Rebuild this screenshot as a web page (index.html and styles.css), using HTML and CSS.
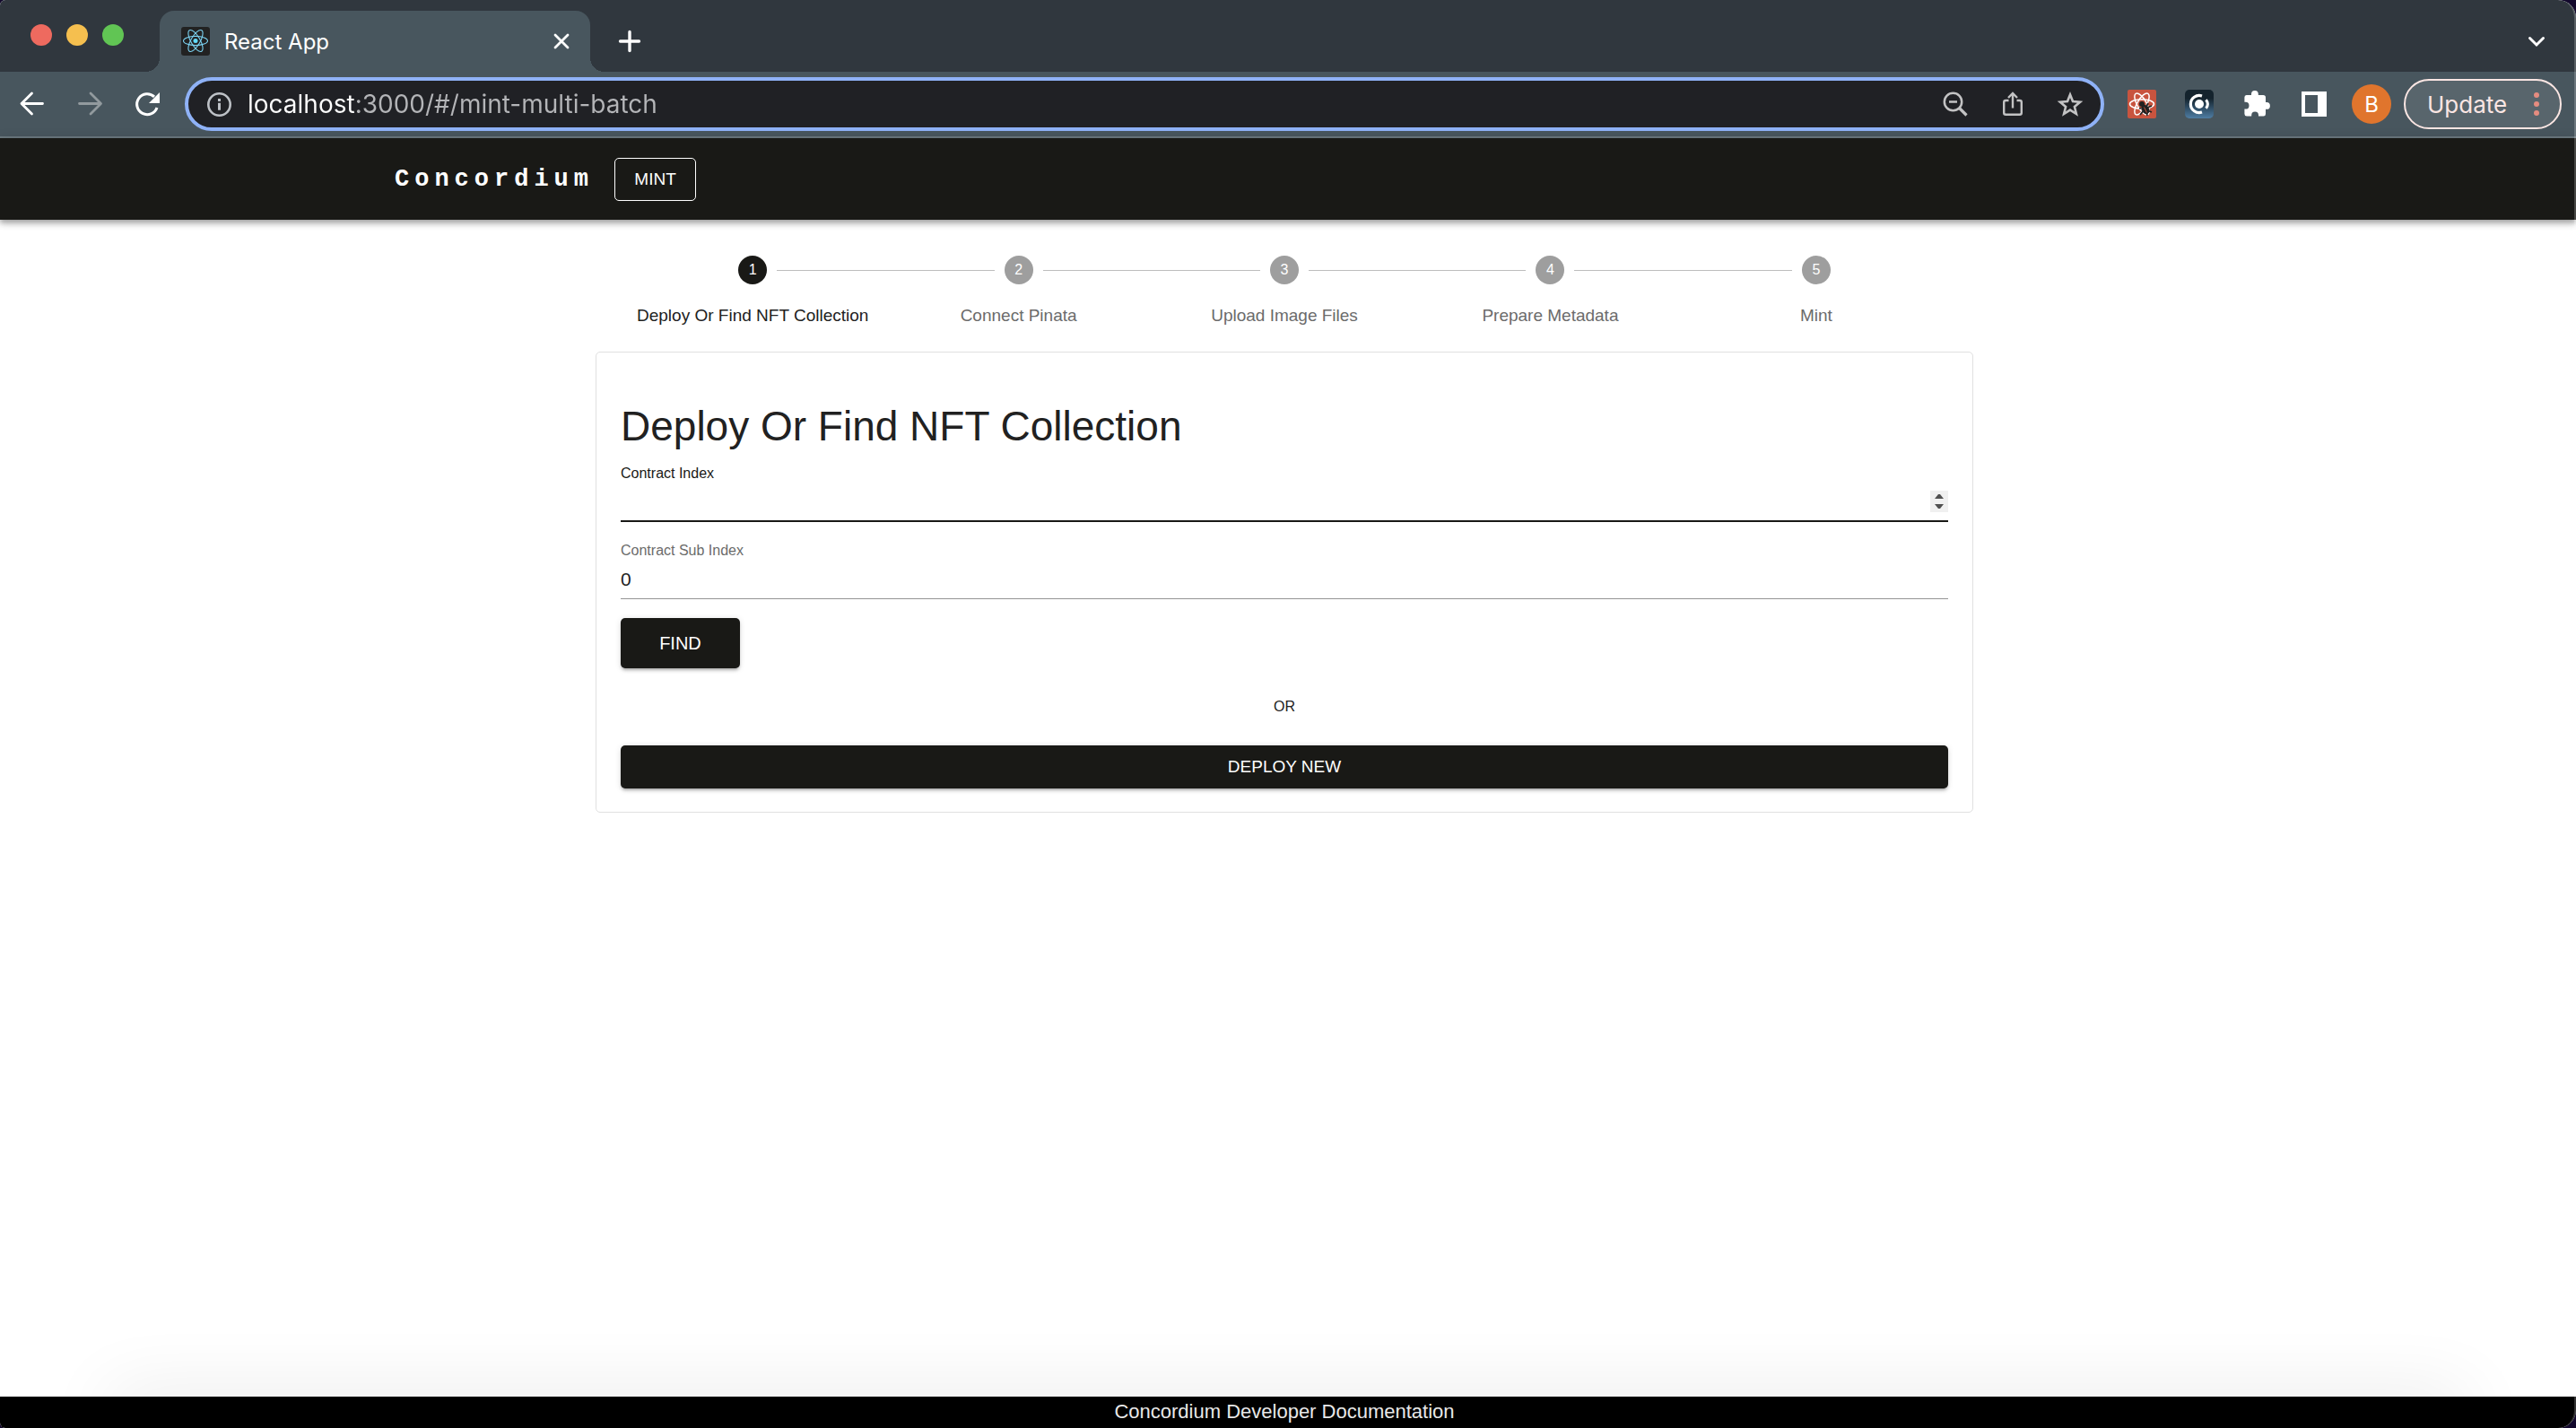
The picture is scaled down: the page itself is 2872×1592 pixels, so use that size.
FILE: index.html
```html
<!DOCTYPE html>
<html lang="en">
<head>
  <meta charset="utf-8">
  <meta name="viewport" content="width=device-width, initial-scale=1">
  <title>React App</title>
  <link rel="stylesheet" href="styles.css">
</head>
<body>
  <div class="window">
    <div class="tab-strip">
      <div class="traffic-lights">
        <span class="light light-close"></span>
        <span class="light light-minimise"></span>
        <span class="light light-zoom"></span>
      </div>
      <div class="tab">
        <svg class="icon" viewBox="0 0 32 32" aria-hidden="true">
          <rect width="32" height="32" rx="3" fill="#222"/>
          <circle cx="16" cy="15.500" r="2.500" fill="#61dafb"/>
          <g fill="none" stroke="#7cd3f2" stroke-width="1.100">
            <ellipse cx="16" cy="15.500" rx="13.500" ry="5.100"/>
            <ellipse cx="16" cy="15.500" rx="13.500" ry="5.100" transform="rotate(60 16 15.500)"/>
            <ellipse cx="16" cy="15.500" rx="13.500" ry="5.100" transform="rotate(120 16 15.500)"/>
          </g>
        </svg>
        <span class="tab-title">React App</span>
        <button class="icon-button" type="button" aria-label="Close tab">
          <svg class="icon" viewBox="0 0 32 32"><path d="M9 9l14 14M23 9L9 23" stroke="#fff" stroke-width="2.800" stroke-linecap="round"/></svg>
        </button>
      </div>
      <button class="icon-button new-tab" type="button" aria-label="New tab">
        <svg class="icon" viewBox="0 0 32 32"><path d="M16 5.500v21M5.500 16h21" stroke="#fff" stroke-width="3.400" stroke-linecap="round"/></svg>
      </button>
      <button class="icon-button tab-search" type="button" aria-label="Search tabs">
        <svg class="icon" viewBox="0 0 32 32"><path d="M8.500 12.500l7.500 7.500 7.500-7.500" fill="none" stroke="#fff" stroke-width="3" stroke-linecap="round"/></svg>
      </button>
    </div>

    <div class="toolbar">
      <div class="history">
        <button class="icon-button" type="button" aria-label="Back">
          <svg class="icon" viewBox="0 0 32 32"><path d="M27.500 15.500H4M15.500 4L4 15.500 15.500 27" fill="none" stroke="#fff" stroke-width="2.800" stroke-linecap="round" stroke-linejoin="round"/></svg>
        </button>
        <button class="icon-button" type="button" aria-label="Forward">
          <svg class="icon" viewBox="0 0 32 32"><path d="M4.500 15.500H28M17 4l11.500 11.500L17 27" fill="none" stroke="#929a9e" stroke-width="2.800" stroke-linecap="round" stroke-linejoin="round"/></svg>
        </button>
        <button class="icon-button" type="button" aria-label="Reload">
          <svg class="icon" viewBox="0 0 32 32"><path d="M27 20A11.500 11.500 0 1 1 24 7.800" fill="none" stroke="#fff" stroke-width="3"/><path d="M30 3v12H18z" fill="#fff"/></svg>
        </button>
      </div>

      <div class="omnibox">
        <svg class="icon" viewBox="0 0 32 32" aria-hidden="true"><circle cx="16.500" cy="16.500" r="12.200" fill="none" stroke="#bdc1c6" stroke-width="2.600"/><path d="M16.500 14.800v8" stroke="#bdc1c6" stroke-width="3"/><path d="M16.500 10v3" stroke="#bdc1c6" stroke-width="3"/></svg>
        <input class="address" type="text" aria-label="Address" value="localhost:3000/#/mint-multi-batch">
        <button class="icon-button" type="button" aria-label="Zoom">
          <svg class="icon" viewBox="0 0 32 32"><g fill="none" stroke="#c3c3c4" stroke-width="2.500"><circle cx="13.500" cy="13.500" r="9.700"/><path d="M9 13.500h9"/><path d="M20.500 20.500l8 8" stroke-width="3.200"/></g></svg>
        </button>
        <button class="icon-button" type="button" aria-label="Share">
          <svg class="icon" viewBox="0 0 32 32"><path d="M11.500 12H8.200a2 2 0 0 0-2 2v11.800a2 2 0 0 0 2 2h15.600a2 2 0 0 0 2-2V14a2 2 0 0 0-2-2h-3.300M16 20.500V4.500M11 9l5-5 5 5" fill="none" stroke="#c3c3c4" stroke-width="2.400"/></svg>
        </button>
        <button class="icon-button" type="button" aria-label="Bookmark this tab">
          <svg class="icon" viewBox="0 0 32 32"><path d="M16 5.500l3 7.600 8.100.6-6.200 5.300 2 8-6.900-4.400L9.100 27l2-8-6.200-5.300 8.100-.6z" fill="none" stroke="#c3c3c4" stroke-width="2.600"/></svg>
        </button>
      </div>

      <div class="extensions">
        <button class="icon-button" type="button" aria-label="React Developer Tools">
          <svg class="icon" viewBox="0 0 32 32">
            <rect width="32" height="32" rx="2" fill="#c8543f"/>
            <g fill="none" stroke="#fff" stroke-width="1.500">
              <ellipse cx="16" cy="16" rx="13.500" ry="5.200"/>
              <ellipse cx="16" cy="16" rx="13.500" ry="5.200" transform="rotate(60 16 16)"/>
              <ellipse cx="16" cy="16" rx="13.500" ry="5.200" transform="rotate(120 16 16)"/>
            </g>
            <circle cx="16" cy="16" r="3" fill="#222"/>
            <ellipse cx="20" cy="22" rx="4" ry="5.500" transform="rotate(-28 20 22)" fill="#222"/>
            <path d="M13 21l5-1M14 28l4-5M22 29l-1-5M21 19l2-4M22 20l5-2M22 23l5 2" stroke="#222" stroke-width="1.700"/>
            <path d="M18.500 19.500l3 6" stroke="#c8543f" stroke-width="1"/>
          </svg>
        </button>
        <button class="icon-button" type="button" aria-label="Concordium Wallet">
          <svg class="icon" viewBox="0 0 32 32">
            <defs><linearGradient id="wallet" x1="0" y1="0" x2="0" y2="1"><stop offset="0.300" stop-color="#14232d"/><stop offset="1" stop-color="#4f7da3"/></linearGradient></defs>
            <rect width="32" height="32" rx="5" fill="url(#wallet)"/>
            <circle cx="16" cy="16" r="5" fill="#fff"/>
            <path d="M19 6.900A9.600 9.600 0 1 0 19 25.100" fill="none" stroke="#fff" stroke-width="3.200"/>
            <path d="M23.500 11.200q3.800 4.800 0 9.600" fill="none" stroke="#fff" stroke-width="3"/>
          </svg>
        </button>
        <button class="icon-button" type="button" aria-label="Extensions">
          <svg class="icon" viewBox="0 0 32 32"><path d="M4.500 6H10V5a3.900 3.900 0 0 1 7.800 0v1h5.400a2.800 2.800 0 0 1 2.800 2.800V14h1a3.900 3.900 0 0 1 0 7.800h-1V27a2.600 2.600 0 0 1-2.800 2.500H18V28.400a3.900 3.900 0 0 0-7.800 0v1.100H5A2.600 2.600 0 0 1 2.400 27V21.600H3.600a3.900 3.900 0 0 0 0-7.800H2.400V8.500A2.500 2.500 0 0 1 4.500 6z" fill="#fff"/></svg>
        </button>
        <button class="icon-button" type="button" aria-label="Side panel">
          <svg class="icon" viewBox="0 0 32 32"><path fill-rule="evenodd" d="M2 2h28v28H2zM6 6v20h14V6z" fill="#fff"/></svg>
        </button>
      </div>
      <button class="avatar" type="button" aria-label="Profile B">B</button>
      <button class="update" type="button">Update
        <svg class="update-dots" viewBox="0 0 6 26" aria-hidden="true"><g fill="#e58c80"><circle cx="3" cy="3" r="3"/><circle cx="3" cy="13" r="3"/><circle cx="3" cy="23" r="3"/></g></svg>
      </button>
    </div>

    <div class="page">
      <header class="app-bar">
        <div class="app-bar-inner">
          <a class="brand" href="#/">Concordium</a>
          <button class="button-outlined" type="button">MINT</button>
        </div>
      </header>

      <main class="content">
        <ol class="stepper">
          <li class="step step-active"><span class="step-icon">1</span><span class="step-label">Deploy Or Find NFT Collection</span></li>
          <li class="step"><span class="step-icon">2</span><span class="step-label">Connect Pinata</span></li>
          <li class="step"><span class="step-icon">3</span><span class="step-label">Upload Image Files</span></li>
          <li class="step"><span class="step-icon">4</span><span class="step-label">Prepare Metadata</span></li>
          <li class="step"><span class="step-icon">5</span><span class="step-label">Mint</span></li>
        </ol>

        <form class="card">
          <h1 class="card-title">Deploy Or Find NFT Collection</h1>
          <div class="field field-focused">
            <label class="field-label" for="contract-index">Contract Index</label>
            <input class="field-input" id="contract-index" type="number">
          </div>
          <div class="field">
            <label class="field-label" for="contract-sub-index">Contract Sub Index</label>
            <input class="field-input" id="contract-sub-index" type="number" value="0">
          </div>
          <button class="button button-find" type="button">FIND</button>
          <p class="divider">OR</p>
          <button class="button button-deploy" type="button">DEPLOY NEW</button>
        </form>
      </main>

      <footer class="footer">
        <a class="footer-link" href="#docs">Concordium Developer Documentation</a>
      </footer>
    </div>
  </div>
</body>
</html>
```
FILE: styles.css
```css
*,
*::before,
*::after {
  box-sizing: border-box;
}

:root {
  --strip: #30373e;
  --chrome: #48565e;
  --ink: #191916;
  --sans: "Liberation Sans", Arial, sans-serif;
  --ui: Inter, Roboto, sans-serif;
}

body {
  margin: 0;
  background: #12082c;
  font-family: var(--sans);
  color: #212121;
}

button,
input {
  margin: 0;
  padding: 0;
  border: 0;
  background: none;
  font: inherit;
  color: inherit;
}

a {
  color: inherit;
  text-decoration: none;
}

.window {
  position: relative;
  display: flex;
  flex-direction: column;
  min-height: 100vh;
  overflow: hidden;
  border-radius: 6px 20px 20px 6px;
  background: #fff;
}

/* Thin highlight along the right edge of the window */
.window::after {
  content: "";
  position: absolute;
  inset: 0;
  border-right: 2px solid rgba(255, 255, 255, 0.2);
  border-radius: inherit;
  pointer-events: none;
}

.icon {
  display: block;
  flex: none;
  width: 32px;
  height: 32px;
}

.icon-button {
  flex: none;
}

/* Browser tabs */

.tab-strip {
  display: flex;
  align-items: flex-end;
  height: 80px;
  padding-right: 28px;
  background: var(--strip);
}

.traffic-lights {
  display: flex;
  gap: 16px;
  align-self: flex-start;
  width: 178px;
  padding: 27px 0 0 34px;
}

.light {
  width: 24px;
  height: 24px;
  border-radius: 50%;
}

.light-close {
  background: #ee6a5f;
}

.light-minimise {
  background: #f5bf4f;
}

.light-zoom {
  background: #61c554;
}

.tab {
  position: relative;
  display: flex;
  align-items: center;
  gap: 16px;
  width: 480px;
  height: 68px;
  padding: 0 16px 0 24px;
  border-radius: 16px 16px 0 0;
  background: var(--chrome);
}

.tab::before,
.tab::after {
  content: "";
  position: absolute;
  bottom: 0;
  width: 16px;
  height: 16px;
}

.tab::before {
  right: 100%;
  background: radial-gradient(circle at 0 0, transparent 16px, var(--chrome) 16px);
}

.tab::after {
  left: 100%;
  background: radial-gradient(circle at 100% 0, transparent 16px, var(--chrome) 16px);
}

.tab-title {
  flex: 1;
  font-family: var(--ui);
  font-size: 24px;
  color: #fff;
}

.new-tab {
  margin: 0 auto 18px 28px;
}

.tab-search {
  margin-bottom: 18px;
}

/* Browser toolbar */

.toolbar {
  display: flex;
  align-items: center;
  height: 74px;
  padding: 4px 16px 4px 20px;
  border-bottom: 2px solid #6d7a80;
  background: var(--chrome);
}

.history,
.extensions {
  display: flex;
  gap: 32px;
  margin-right: 26px;
}

.omnibox {
  display: flex;
  flex: 1;
  align-items: center;
  gap: 32px;
  height: 60px;
  margin-right: 26px;
  padding: 0 18px;
  border: 4px solid #8fb2f7;
  border-radius: 30px;
  background: #202125;
}

.address {
  flex: 1;
  min-width: 0;
  height: 48px;
  margin-left: -16px;
  outline: 0;
  font-family: var(--ui);
  font-size: 28px;
  /* Host in white, the rest of the address dimmed */
  color: #b4b5b8;
  background: linear-gradient(90deg, #fff 120px, #b4b5b8 120px);
  background-clip: text;
  -webkit-background-clip: text;
  -webkit-text-fill-color: transparent;
}

.avatar {
  width: 44px;
  height: 44px;
  margin-right: 14px;
  border-radius: 50%;
  background: #e0752d;
  font-family: var(--ui);
  font-size: 24px;
  color: #fff;
}

.update {
  display: flex;
  align-items: center;
  justify-content: space-between;
  width: 176px;
  height: 56px;
  padding: 0 23px 0 24px;
  border: 2px solid #fbe6e3;
  border-radius: 28px;
  background: #58656c;
  font-family: var(--ui);
  font-size: 26px;
  color: #fbe6e3;
}

.update-dots {
  width: 6px;
  height: 26px;
}

/* Application */

.page {
  display: flex;
  flex: 1;
  flex-direction: column;
}

.app-bar {
  padding-right: 8px;
  background: var(--ink);
  box-shadow: 0 3px 5px rgba(0, 0, 0, 0.2), 0 5px 7px rgba(0, 0, 0, 0.14), 0 1px 13px rgba(0, 0, 0, 0.12);
}

.app-bar-inner {
  display: flex;
  align-items: center;
  gap: 23px;
  max-width: 2048px;
  min-height: 91px;
  margin: 0 auto;
  padding: 0 32px;
}

.brand {
  font-family: "Courier New", "Liberation Mono", monospace;
  font-size: 27px;
  font-weight: 700;
  letter-spacing: 6px;
  color: #fff;
}

.button-outlined {
  min-width: 91px;
  height: 48px;
  padding: 0 20px;
  border: 1px solid #fff;
  border-radius: 5px;
  font-size: 19px;
  color: #fff;
}

.content {
  width: 100%;
  max-width: 1544px;
  margin: 0 auto;
  padding: 40px 8px 32px 0;
}

.stepper {
  display: flex;
  margin: 0;
  padding: 0 27px;
  list-style: none;
}

.step {
  position: relative;
  display: flex;
  flex: 1;
  flex-direction: column;
  align-items: center;
  gap: 22px;
  color: #6b6b6b;
}

/* Connector back to the previous step */
.step + .step::before {
  content: "";
  position: absolute;
  top: 16px;
  left: calc(-50% + 27px);
  right: calc(50% + 27px);
  border-top: 1px solid #bdbdbd;
}

.step-icon {
  display: grid;
  place-items: center;
  width: 32px;
  height: 32px;
  border-radius: 50%;
  background: #9e9e9e;
  font-size: 16px;
  color: #fff;
}

.step-label {
  font-size: 19px;
  line-height: 26px;
}

.step-active {
  color: #212121;
}

.step-active .step-icon {
  background: var(--ink);
}

.card {
  display: flex;
  flex-direction: column;
  align-items: flex-start;
  margin-top: 27px;
  padding: 54px 27px 26px;
  border: 1px solid #e0e0e0;
  border-radius: 5px;
}

.card-title {
  margin: 0;
  font-size: 46px;
  font-weight: 400;
  line-height: 56px;
}

.field {
  display: flex;
  flex-direction: column;
  width: 100%;
  height: 86px;
  padding-top: 15px;
  color: #6b6b6b;
}

.field-label {
  font-size: 16px;
  line-height: 20px;
}

.field-input {
  width: 100%;
  height: 44px;
  padding: 8px 0;
  border-bottom: 1px solid #949494;
  outline: 0;
  font-size: 21px;
  color: #212121;
}

.field-input::-webkit-inner-spin-button {
  appearance: none;
  -webkit-appearance: none;
  width: 20px;
  height: 24px;
  opacity: 0;
}

.field-focused {
  color: var(--ink);
}

.field-focused .field-input {
  border-bottom: 2px solid var(--ink);
}

.field-focused .field-input::-webkit-inner-spin-button {
  opacity: 1;
  background: #f0f0f0 url("data:image/svg+xml,%3Csvg xmlns='http://www.w3.org/2000/svg' viewBox='0 0 20 24'%3E%3Cpath d='M5 9h10l-4-5H9zM5 15h10l-4 5H9z' fill='%23505050'/%3E%3C/svg%3E") center / 20px 24px no-repeat;
}

.button {
  height: 48px;
  border-radius: 5px;
  background: var(--ink);
  box-shadow: 0 4px 2px -3px rgba(0, 0, 0, 0.2), 0 3px 3px rgba(0, 0, 0, 0.14), 0 1px 7px rgba(0, 0, 0, 0.12);
  font-size: 19px;
  color: #fff;
}

.button-find {
  width: 133px;
  height: 56px;
  margin-top: 14px;
  font-size: 20px;
}

.divider {
  align-self: center;
  margin: 32px 0;
  font-size: 16px;
  line-height: 22px;
}

.button-deploy {
  width: 100%;
}

.footer {
  position: relative;
  z-index: 0;
  margin-top: auto;
  padding: 0 8px 2px 0;
  background: #000;
  text-align: center;
}

/* Soft shade rising above the footer, fading out before the window's sides */
.footer::before {
  content: "";
  position: absolute;
  z-index: -1;
  inset: 0 120px;
  border-radius: 16px;
  box-shadow: 0 0 80px rgba(0, 0, 0, 0.12);
}

.footer-link {
  display: block;
  font-size: 22px;
  line-height: 33px;
  color: #e8e8e8;
}
```
